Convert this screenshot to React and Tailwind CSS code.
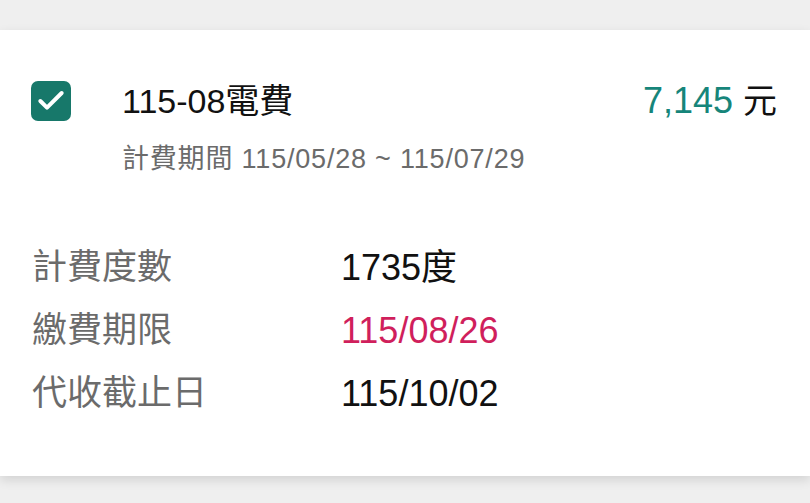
import { Check } from "lucide-react";

const rows = [
  { label: "計費度數", value: "1735度", tone: "text-[#111]" },
  { label: "繳費期限", value: "115/08/26", tone: "text-[#d01f5c]" },
  { label: "代收截止日", value: "115/10/02", tone: "text-[#111]" },
];

export default function App() {
  return (
    <div
      className="h-[503px] w-[810px] overflow-hidden bg-[#efefef] pt-[30px]"
      style={{ fontFamily: '"Liberation Sans", "Noto Sans CJK TC", sans-serif' }}
    >
      <div className="h-[446px] bg-white shadow-[0_4px_10px_rgba(0,0,0,0.12)]">
        <div className="flex items-start pl-[31px] pr-[33px] pt-[51px]">
          <div className="flex h-[40px] w-[40px] shrink-0 items-center justify-center rounded-[7px] bg-[#17786a] text-white">
            <Check size={32} strokeWidth={3} />
          </div>
          <div className="ml-[51px] flex-1">
            <p className="text-[34px] leading-[40px] text-[#111]">115-08電費</p>
            <p className="mt-[23px] text-[27px] leading-[30px] tracking-[0.8px] text-[#6b6b6b]">
              計費期間 115/05/28 ~ 115/07/29
            </p>
          </div>
          <p className="text-[34px] leading-[40px]">
            <span className="text-[36px] text-[#16857a]">7,145</span>
            <span className="ml-[10px] text-[#111]">元</span>
          </p>
        </div>
        <div className="mt-[62px] pl-[32px]">
          {rows.map((row) => (
            <div key={row.label} className="flex h-[63px] items-center">
              <span className="w-[309px] text-[35px] text-[#6b6b6b]">{row.label}</span>
              <span className={`text-[36px] ${row.tone}`}>{row.value}</span>
            </div>
          ))}
        </div>
      </div>
    </div>
  );
}
